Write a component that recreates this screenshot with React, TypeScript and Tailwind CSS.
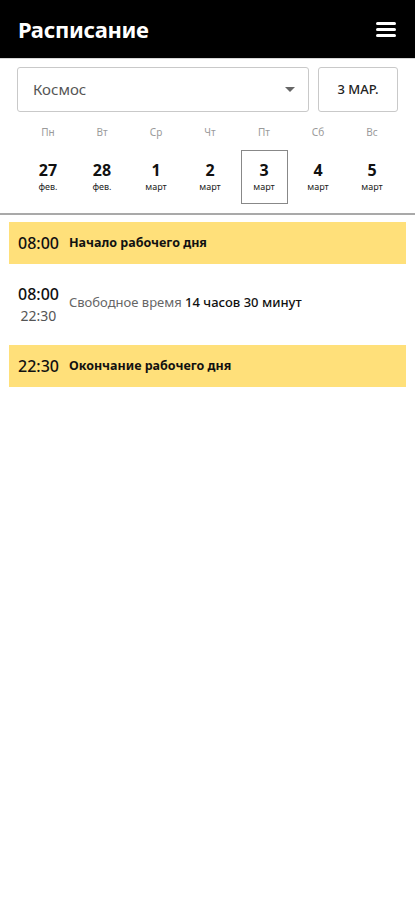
const days = [
  { wd: "Пн", d: "27", m: "фев." },
  { wd: "Вт", d: "28", m: "фев." },
  { wd: "Ср", d: "1", m: "март" },
  { wd: "Чт", d: "2", m: "март" },
  { wd: "Пт", d: "3", m: "март", active: true },
  { wd: "Сб", d: "4", m: "март" },
  { wd: "Вс", d: "5", m: "март" },
];

export default function App() {
  return (
    <div className="min-h-[900px] bg-white text-[#111] font-['Noto_Sans',sans-serif]">
      {/* Header */}
      <header className="h-[59px] bg-black flex items-center justify-between pl-[18px] pr-[19px] border-b border-[#d6d6d6]">
        <h1 className="text-white text-[22px] font-bold tracking-[-0.3px]">Расписание</h1>
        <button className="flex flex-col gap-[3px] w-[20px]">
          <span className="h-[3px] bg-white rounded-sm" />
          <span className="h-[3px] bg-white rounded-sm" />
          <span className="h-[3px] bg-white rounded-sm" />
        </button>
      </header>

      {/* Controls */}
      <div className="flex gap-[9px] pl-[17px] pr-[17px] pt-[8px]">
        <div className="flex-1 h-[45px] border border-[#c9c9c9] rounded-[3px] flex items-center justify-between pl-[15px] pr-[13px]">
          <span className="text-[15px] text-[#555]">Космос</span>
          <svg width="10" height="6" viewBox="0 0 10 6">
            <path d="M0 0h10L5 5z" fill="#666" />
          </svg>
        </div>
        <button className="w-[80px] h-[45px] border border-[#c9c9c9] rounded-[3px] text-[13px] font-medium text-[#222]">
          3 МАР.
        </button>
      </div>

      {/* Week */}
      <div className="grid grid-cols-7 pl-[21px] pr-[16px] pt-[13px]">
        {days.map((x) => (
          <div key={x.d} className="flex flex-col items-center">
            <span className="text-[10px] text-[#9a9a9a] leading-[14px]">{x.wd}</span>
            <div
              className={`mt-[11px] w-[47px] h-[54px] flex flex-col items-center justify-center ${
                x.active ? "border border-[#888]" : "border border-transparent"
              }`}
            >
              <span className="text-[16px] font-bold leading-[19px] text-[#111]">{x.d}</span>
              <span className="text-[9px] leading-[13px] text-[#222]">{x.m}</span>
            </div>
          </div>
        ))}
      </div>
      <div className="mt-[9px] h-[2px] bg-[#a9a9a9]" />

      {/* Events */}
      <div className="px-[9px] pt-[7px]">
        <div className="h-[42px] bg-[#ffe07a] flex items-center pl-[9px] gap-[10px]">
          <span className="text-[16px] font-medium text-[#111]">08:00</span>
          <span className="text-[12.5px] font-bold text-[#111]">Начало рабочего дня</span>
        </div>

        <div className="h-[81px] flex items-center pl-[9px] gap-[10px]">
          <div className="flex flex-col items-center">
            <span className="text-[16px] font-medium leading-[22px] text-[#111]">08:00</span>
            <span className="text-[14px] leading-[22px] text-[#555]">22:30</span>
          </div>
          <span className="text-[13px] text-[#666] -mt-[3px]">
            Свободное время <span className="text-[#111] font-medium">14 часов 30 минут</span>
          </span>
        </div>

        <div className="h-[42px] bg-[#ffe07a] flex items-center pl-[9px] gap-[10px]">
          <span className="text-[16px] font-medium text-[#111]">22:30</span>
          <span className="text-[12.5px] font-bold text-[#111]">Окончание рабочего дня</span>
        </div>
      </div>
    </div>
  );
}
